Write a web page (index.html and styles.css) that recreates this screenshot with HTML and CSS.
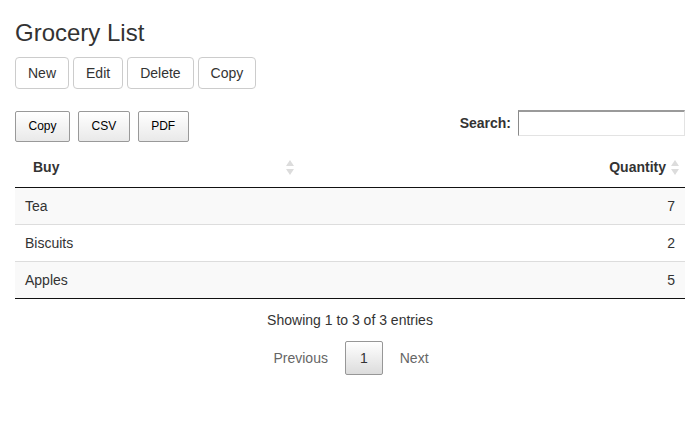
FILE: index.html
```html
<!DOCTYPE html>
<html>
<head>
<meta charset="utf-8">
<title>Grocery List</title>
<link rel="stylesheet" href="styles.css">
</head>
<body>
<div class="page">
  <h2 class="title">Grocery List</h2>
  <div class="btn-group">
    <button class="btn">New</button>
    <button class="btn">Edit</button>
    <button class="btn">Delete</button>
    <button class="btn">Copy</button>
  </div>
  <div class="dt-controls">
    <div class="dt-buttons">
      <button class="dt-btn">Copy</button>
      <button class="dt-btn">CSV</button>
      <button class="dt-btn">PDF</button>
    </div>
    <label class="dt-search">Search: <input type="search" class="dt-input"></label>
  </div>
  <table class="dt-table">
    <colgroup><col class="col-buy"><col class="col-qty"></colgroup>
    <thead>
      <tr>
        <th><div class="th-inner th-left"><span>Buy</span><svg class="sort" width="8" height="15" viewBox="0 0 8 15"><path d="M4 0 L8 6 L0 6 Z" fill="#dcdcdc"/><path d="M0 9 L8 9 L4 15 Z" fill="#dcdcdc"/></svg></div></th>
        <th><div class="th-inner th-right"><span>Quantity</span><svg class="sort" width="8" height="15" viewBox="0 0 8 15"><path d="M4 0 L8 6 L0 6 Z" fill="#dcdcdc"/><path d="M0 9 L8 9 L4 15 Z" fill="#dcdcdc"/></svg></div></th>
      </tr>
    </thead>
    <tbody>
      <tr class="odd"><td>Tea</td><td class="num">7</td></tr>
      <tr class="even"><td>Biscuits</td><td class="num">2</td></tr>
      <tr class="odd"><td>Apples</td><td class="num">5</td></tr>
    </tbody>
  </table>
  <div class="dt-info">Showing 1 to 3 of 3 entries</div>
  <div class="dt-paginate">
    <span class="page-btn disabled">Previous</span>
    <span class="page-btn current">1</span>
    <span class="page-btn disabled">Next</span>
  </div>
</div>
</body>
</html>
```
FILE: styles.css
```css
* { box-sizing: border-box; }
body {
  margin: 0;
  font-family: "Liberation Sans", Arial, sans-serif;
  font-size: 14px;
  color: #333;
  background: #fff;
}
.page { padding: 0 15px; }
.title {
  margin: 20px 0 11px;
  font-size: 24px;
  font-weight: normal;
  line-height: 26px;
  color: #333;
}
.btn-group { display: flex; gap: 4px; }
.btn {
  font-family: inherit;
  font-size: 14px;
  line-height: 18px;
  padding: 6px 12px;
  color: #333;
  background: #fff;
  border: 1px solid #ccc;
  border-radius: 4px;
}
.dt-controls {
  display: flex;
  justify-content: space-between;
  align-items: flex-start;
  margin-top: 21px;
}
.dt-buttons { display: flex; gap: 8px; margin-top: 1px; }
.dt-btn {
  font-family: inherit;
  font-size: 12px;
  line-height: 15px;
  padding: 7px 12.5px;
  color: #000;
  background: linear-gradient(to bottom, #ffffff 0%, #e9e9e9 100%);
  border: 1px solid #999;
  border-radius: 2px;
}
.dt-search {
  display: flex;
  align-items: center;
  gap: 7px;
  font-weight: bold;
  color: #333;
}
.dt-input {
  width: 167px;
  height: 26px;
  margin: 0;
  border-style: solid;
  border-width: 2px 1px 1px 1px;
  border-color: #9a9a9a #e3e3e3 #e3e3e3 #8a8a8a;
  background: #fff;
}
.dt-table {
  width: 100%;
  margin-top: 5px;
  border-collapse: collapse;
  table-layout: fixed;
}
.col-buy { width: 285px; }
.dt-table th {
  padding: 10px 6px 10px 18px;
  font-weight: bold;
  line-height: 20px;
  color: #333;
  border-bottom: 1px solid #111;
}
.th-inner { display: flex; align-items: center; gap: 5px; }
.th-left { justify-content: space-between; }
.th-right { justify-content: flex-end; }
.sort { display: block; }
.dt-table td {
  padding: 8px 10px;
  line-height: 20px;
  border-top: 1px solid #ddd;
}
.dt-table tbody tr:first-child td { border-top: none; }
.dt-table tbody tr:last-child td { border-bottom: 1px solid #111; }
.dt-table tr.odd td { background: #f9f9f9; }
.dt-table td.num { text-align: right; }
.dt-info {
  margin-top: 11px;
  text-align: center;
  line-height: 20px;
}
.dt-paginate {
  margin-top: 11px;
  display: flex;
  justify-content: center;
}
.page-btn {
  margin-left: 2px;
  padding: 6px 14px;
  line-height: 20px;
  border: 1px solid transparent;
  border-radius: 2px;
  color: #666;
}
.page-btn.current {
  color: #333;
  border-color: #979797;
  background: linear-gradient(to bottom, #ffffff 0%, #dcdcdc 100%);
}
```
